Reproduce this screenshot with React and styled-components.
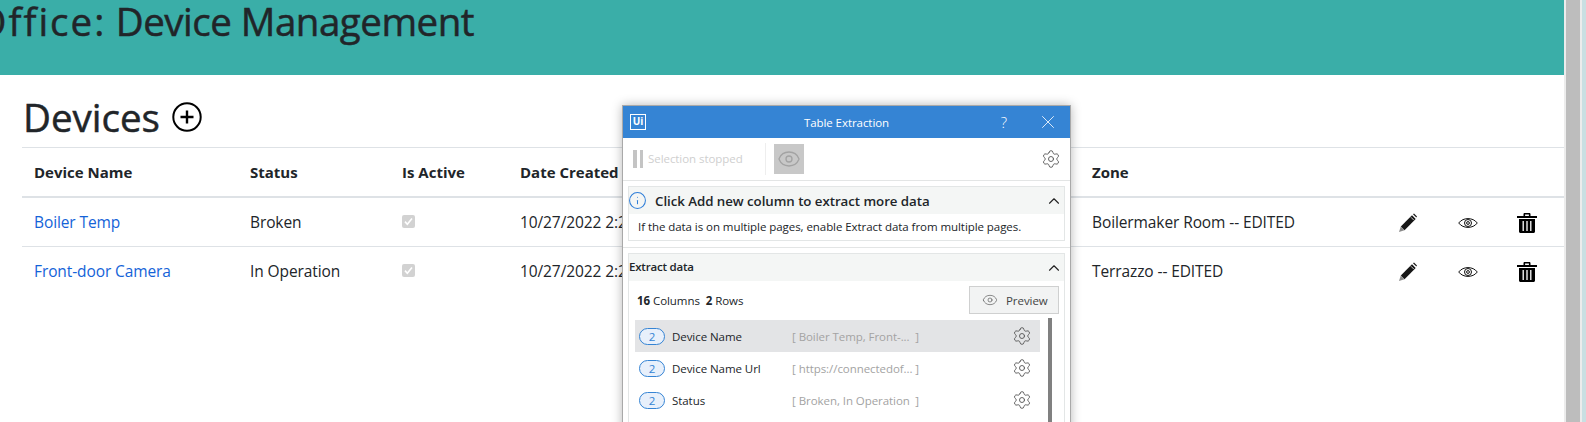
import React from 'react';
import styled, { createGlobalStyle } from 'styled-components';
import { Settings, Eye, ChevronUp, X, Info } from 'lucide-react';

const Global = createGlobalStyle`
  html, body { margin: 0; padding: 0; height: 422px; overflow: hidden; background: #fff; }
  body { font-family: "Open Sans", "Noto Sans", sans-serif; color: #212529; }
`;

const Shell = styled.div`
  display: flex;
  position: relative;
  width: 1586px;
  height: 422px;
  overflow: hidden;
`;

const Page = styled.main`
  width: 1564px;
  flex: none;
  overflow: hidden;
`;

const Banner = styled.header`
  height: 75px;
  background: #3aaea8;
  overflow: hidden;
`;

const BannerTitle = styled.h1`
  display: flex;
  justify-content: flex-end;
  width: 474px;
  margin: -9px 0 0;
  font-size: 38.5px;
  line-height: 60px;
  font-weight: 400;
  letter-spacing: -0.5px;
  font-variant-ligatures: none;
  -webkit-text-stroke: 0.5px #212529;
  white-space: pre;
`;

const WideWord = styled.span`
  letter-spacing: 2px;
`;

const Content = styled.section`
  padding-left: 22px;
`;

const HeadingRow = styled.div`
  display: flex;
  align-items: center;
  gap: 12px;
  height: 72px;
  box-sizing: border-box;
  padding: 12px 0 0 1px;
`;

const Heading = styled.h2`
  margin: 0;
  font-size: 38.5px;
  line-height: 60px;
  font-weight: 400;
  letter-spacing: 0;
  -webkit-text-stroke: 0.5px #212529;
`;

const Table = styled.table`
  width: 1542px;
  table-layout: fixed;
  border-collapse: collapse;
`;

const Th = styled.th`
  height: 48px;
  padding: 0 12px;
  text-align: left;
  font-size: 15px;
  font-weight: 700;
  letter-spacing: 0;
  border-top: 1px solid #dee2e6;
  border-bottom: 2px solid #dee2e6;
`;

const Row = styled.tr`
  & + & td { border-top: 1px solid #dee2e6; }
`;

const Td = styled.td`
  height: 48px;
  padding: 0 12px;
  font-size: 15.5px;
  letter-spacing: -0.1px;
  white-space: nowrap;
`;

const IconCell = styled.td`
  height: 46px;
  padding: 2px 0 0;
  text-align: center;
  line-height: 0;
  &:last-child { padding-right: 7px; }
`;

const DeviceLink = styled.a`
  color: #1463d8;
  text-decoration: none;
`;

const DisabledCheck = styled.span`
  display: inline-flex;
  align-items: center;
  justify-content: center;
  width: 13px;
  height: 13px;
  margin-top: -4px;
  vertical-align: middle;
  border-radius: 2px;
  background: #d2d2d2;
`;

const ScrollTrack = styled.div`
  width: 18px;
  flex: none;
  background: #ececec;
  padding: 0 2px;
  box-sizing: border-box;
`;

const ScrollThumb = styled.div`
  height: 100%;
  background: #bdbdbd;
`;

const WindowEdge = styled.div`
  flex: 1;
  background: #c9dfe2;
`;

/* floating extraction window */
const Dialog = styled.aside`
  position: absolute;
  left: 622px;
  top: 105px;
  width: 449px;
  height: 340px;
  box-sizing: border-box;
  background: #fff;
  border: 1px solid #a9a9a9;
  border-bottom: 0;
  box-shadow: 0 0 10px rgba(0, 0, 0, 0.28);
  font-size: 11.5px;
  letter-spacing: -0.06px;
  overflow: hidden;
`;

const TitleBar = styled.div`
  display: grid;
  grid-template-columns: 1fr auto 1fr;
  align-items: center;
  height: 32px;
  padding: 0 11px;
  background: #3584d4;
  color: #fff;
`;

const TitleActions = styled.div`
  display: flex;
  justify-content: flex-end;
  align-items: center;
  gap: 30px;
  font-size: 15px;
  font-weight: 300;
`;

const Logo = styled.div`
  width: 16px;
  height: 16px;
  margin-left: -4px;
  box-sizing: border-box;
  border: 1.5px solid #fff;
  color: #fff;
  font-size: 10px;
  font-weight: 700;
  line-height: 13px;
  letter-spacing: 0;
  text-align: center;
`;

const Toolbar = styled.div`
  display: flex;
  align-items: center;
  height: 42px;
  padding: 0 9px 0 10px;
  border-bottom: 1px solid #e3e5e5;
`;

const PauseBars = styled.div`
  display: flex;
  gap: 3px;
  margin-right: 5px;
  & > i { width: 3.5px; height: 18px; background: #c4c4c4; }
`;

const StoppedLabel = styled.span`
  width: 117px;
  color: #cfcfcf;
  border-right: 1px solid #eeeeee;
  line-height: 32px;
  margin-right: 8px;
`;

const EyeToggle = styled.div`
  display: flex;
  align-items: center;
  justify-content: center;
  width: 30px;
  height: 30px;
  background: #c8c8c8;
  color: #a3a3a3;
`;

const Spacer = styled.div`
  flex: 1;
`;

const Panel = styled.div`
  margin: 5px 5px 0;
  border: 1px solid #e3e6e6;
  background: #fff;
`;

const PanelHead = styled.div`
  display: flex;
  align-items: center;
  height: 27px;
  padding: 0 1px 0 0;
  background: #f4f6f5;
`;

const InfoIcon = styled(Info)`
  margin-left: -1px;
  flex: none;
`;

const InfoTitle = styled.div`
  flex: 1;
  margin-left: 8px;
  font-size: 13.3px;
  font-weight: 600;
  letter-spacing: -0.05px;
`;

const PanelLabel = styled.div`
  flex: 1;
  padding-bottom: 2px;
  font-size: 11.5px;
  font-weight: 600;
  letter-spacing: -0.2px;
`;

const PanelNote = styled.p`
  margin: 0;
  padding: 0 9px;
  line-height: 26px;
`;

const Divider = styled.div`
  height: 1px;
  margin-top: 6px;
  background: #e3e5e5;
`;

const CountRow = styled.div`
  display: flex;
  align-items: center;
  justify-content: space-between;
  padding: 5px 5px 0 8px;
`;

const CountText = styled.div`
  b { font-weight: 700; }
`;

const PreviewButton = styled.div`
  display: flex;
  align-items: center;
  gap: 8px;
  width: 90px;
  height: 28px;
  box-sizing: border-box;
  padding-left: 12px;
  background: #f2f3f3;
  border: 1px solid #cfd0d0;
  color: #444;
`;

const ListArea = styled.div`
  display: flex;
  gap: 8px;
  padding: 6px 0 0 6px;
`;

const ColumnList = styled.div`
  width: 405px;
  flex: none;
`;

const ColumnRow = styled.div`
  display: flex;
  align-items: center;
  height: 32px;
  padding-left: 4px;
  background: ${p => (p.$selected ? '#e3e4e6' : 'transparent')};
`;

const CountPill = styled.span`
  width: 26px;
  height: 17px;
  box-sizing: border-box;
  border: 1px solid #3584d4;
  border-radius: 9px;
  background: #e8f0fb;
  color: #3584d4;
  line-height: 15px;
  text-align: center;
  margin-right: 7px;
`;

const ColumnName = styled.span`
  width: 120px;
`;

const ColumnValue = styled.span`
  display: flex;
  justify-content: space-between;
  width: 127px;
  color: #a3a3a3;
  white-space: nowrap;
  margin-right: 93px;
`;

const ListScroll = styled.div`
  width: 4px;
  height: 120px;
  margin-top: -2px;
  background: #808080;
`;

const PlusCircle = () => (
  <svg width="30" height="30" viewBox="0 0 30 30" fill="none" stroke="#000">
    <circle cx="15" cy="15" r="13.7" strokeWidth="2" />
    <path d="M15 8.500v13M8.500 15h13" strokeWidth="2.400" />
  </svg>
);

const Pencil = () => (
  <svg width="20" height="20" viewBox="0 0 20 20">
    <path d="M14 2.300l3.700 3.700L6.500 17.200 2.800 13.500z" fill="#161616" />
    <path d="M15 1.300l1-.7 3 3-.7 1z" fill="#161616" />
    <path d="M2.800 13.500l3.700 3.700L1 19z" fill="#8a8a8a" />
    <path d="M13 4.300l2.700 2.700" stroke="#fff" strokeWidth="0.8" />
  </svg>
);

const OutlineEye = () => (
  <svg width="20" height="10" viewBox="0 0 20 10" fill="none" stroke="#111">
    <path d="M.7 5C3 2 6.400.6 10 .6S17 2 19.300 5C17 8 13.600 9.400 10 9.400S3 8 .7 5z" strokeWidth="1" />
    <circle cx="10" cy="5" r="3.500" strokeWidth="1" />
    <circle cx="10" cy="5" r="1.400" strokeWidth="1" />
  </svg>
);

const Trash = () => (
  <svg width="20" height="20" viewBox="0 0 20 20">
    <path d="M0 3h20v2H0zM6.500 3V1.200C6.500.6 7 0 7.600 0h4.800c.6 0 1.100.6 1.100 1.200V3h-1.600V1.500H8.100V3z" fill="#000" />
    <path d="M2 6h16v12.500c0 .8-.7 1.500-1.500 1.500h-13C2.700 20 2 19.300 2 18.500z" fill="#000" />
    <path d="M6.200 8v10M10 8v10M13.800 8v10" stroke="#fff" strokeWidth="1.300" />
  </svg>
);

const TickMark = () => (
  <svg width="9" height="9" viewBox="0 0 9 9" fill="none" stroke="#fff" strokeWidth="1.600">
    <path d="M1 4.600l2.300 2.600L8 1.400" />
  </svg>
);

const devices = [
  { name: 'Boiler Temp', status: 'Broken', zone: 'Boilermaker Room -- EDITED' },
  { name: 'Front-door Camera', status: 'In Operation', zone: 'Terrazzo -- EDITED' },
];

const columns = [
  { name: 'Device Name', value: 'Boiler Temp, Front-...', selected: true },
  { name: 'Device Name Url', value: 'https://connectedof...' },
  { name: 'Status', value: 'Broken, In Operation' },
];

const DevicesTable = () => (
  <Table>
    <colgroup>
      <col width="216" />
      <col width="152" />
      <col width="118" />
      <col width="572" />
      <col width="298" />
      <col width="60" />
      <col width="59" />
      <col width="67" />
    </colgroup>
    <thead>
      <tr>
        <Th>Device Name</Th>
        <Th>Status</Th>
        <Th>Is Active</Th>
        <Th>Date Created</Th>
        <Th>Zone</Th>
        <Th />
        <Th />
        <Th />
      </tr>
    </thead>
    <tbody>
      {devices.map(device => (
        <Row key={device.name}>
          <Td><DeviceLink href="#">{device.name}</DeviceLink></Td>
          <Td>{device.status}</Td>
          <Td><DisabledCheck><TickMark /></DisabledCheck></Td>
          <Td>10/27/2022 2:24 PM</Td>
          <Td>{device.zone}</Td>
          <IconCell><Pencil /></IconCell>
          <IconCell><OutlineEye /></IconCell>
          <IconCell><Trash /></IconCell>
        </Row>
      ))}
    </tbody>
  </Table>
);

const ExtractionDialog = () => (
  <Dialog>
    <TitleBar>
      <Logo>Ui</Logo>
      <span>Table Extraction</span>
      <TitleActions>
        <span>?</span>
        <X size={22} strokeWidth={0.9} />
      </TitleActions>
    </TitleBar>
    <Toolbar>
      <PauseBars><i /><i /></PauseBars>
      <StoppedLabel>Selection stopped</StoppedLabel>
      <EyeToggle><Eye size={24} strokeWidth={1.3} /></EyeToggle>
      <Spacer />
      <Settings size={20} strokeWidth={1.1} color="#555" />
    </Toolbar>
    <Panel>
      <PanelHead>
        <InfoIcon size={19} strokeWidth={1.3} color="#2f7ed8" />
        <InfoTitle>Click Add new column to extract more data</InfoTitle>
        <ChevronUp size={18} strokeWidth={1.5} color="#222" />
      </PanelHead>
      <PanelNote>If the data is on multiple pages, enable Extract data from multiple pages.</PanelNote>
    </Panel>
    <Divider />
    <Panel>
      <PanelHead>
        <PanelLabel>Extract data</PanelLabel>
        <ChevronUp size={18} strokeWidth={1.5} color="#222" />
      </PanelHead>
      <CountRow>
        <CountText><b>16</b> Columns&nbsp; <b>2</b> Rows</CountText>
        <PreviewButton><Eye size={16} strokeWidth={1} color="#555" />Preview</PreviewButton>
      </CountRow>
      <ListArea>
        <ColumnList>
          {columns.map(column => (
            <ColumnRow key={column.name} $selected={column.selected}>
              <CountPill>2</CountPill>
              <ColumnName>{column.name}</ColumnName>
              <ColumnValue>[ {column.value} <span>]</span></ColumnValue>
              <Settings size={20} strokeWidth={1.1} color="#555" />
            </ColumnRow>
          ))}
        </ColumnList>
        <ListScroll />
      </ListArea>
    </Panel>
  </Dialog>
);

const App = () => (
  <Shell>
    <Global />
    <Page>
      <Banner>
        <BannerTitle><WideWord>Connected Office:</WideWord> Device Management</BannerTitle>
      </Banner>
      <Content>
        <HeadingRow>
          <Heading>Devices</Heading>
          <PlusCircle />
        </HeadingRow>
        <DevicesTable />
      </Content>
    </Page>
    <ScrollTrack><ScrollThumb /></ScrollTrack>
    <WindowEdge />
    <ExtractionDialog />
  </Shell>
);

export default App;
